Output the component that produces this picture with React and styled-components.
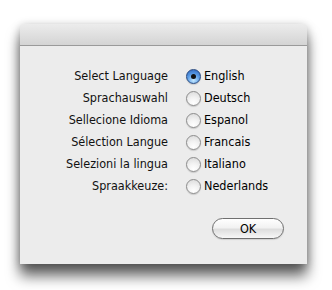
import { Fragment } from "react";
import styled, { createGlobalStyle } from "styled-components";

const FONT = `"Lucida Grande", "DejaVu Sans Condensed", "DejaVu Sans", sans-serif`;

const GlobalStyle = createGlobalStyle`
  body {
    margin: 0;
    background: #ffffff;
    font-family: ${FONT};
  }
`;

const Page = styled.div`
  padding: 24px 0 0 20px;
  width: 332px;
  height: 290px;
  box-sizing: border-box;
`;

const Window = styled.div`
  width: 287px;
  height: 240px;
  background: #ececec;
  border-radius: 5px 5px 0 0;
  box-shadow: 0 12px 14px rgba(0, 0, 0, 0.6), 0 2px 10px rgba(0, 0, 0, 0.28);
  display: flex;
  flex-direction: column;
`;

const TitleBar = styled.div`
  height: 21px;
  border-radius: 5px 5px 0 0;
  background: linear-gradient(#ececec, #d4d4d4);
  border-bottom: 1px solid #9a9a9a;
`;

const Body = styled.div`
  flex: 1;
  display: flex;
  flex-direction: column;
  padding: 22px 23px 0 0;
`;

const Grid = styled.div`
  display: grid;
  grid-template-columns: 148px auto;
  column-gap: 18px;
  row-gap: 6px;
  align-items: center;
`;

const Label = styled.div`
  text-align: right;
  font-size: 12.5px;
  color: #111;
  line-height: 16px;
`;

const Option = styled.label`
  display: flex;
  align-items: center;
  gap: 3px;
  font-size: 12.5px;
  color: #000;
  line-height: 16px;
`;

const Radio = styled.span`
  width: 15px;
  height: 15px;
  flex: none;
  border-radius: 50%;
  box-sizing: border-box;
  display: flex;
  align-items: center;
  justify-content: center;
  border: 1px solid ${(p) => (p.$on ? "#27497f" : "#8c8c8c")};
  background: ${(p) =>
    p.$on
      ? "radial-gradient(circle at 50% 80%, #c4e8ff 0%, #5b9de6 50%, #2a5fb8 100%)"
      : "radial-gradient(circle at 50% 85%, #ffffff 0%, #f2f2f2 45%, #d8d8d8 100%)"};
  box-shadow: 0 1px 1px rgba(0, 0, 0, 0.15);

  &::after {
    content: "";
    width: 5px;
    height: 5px;
    border-radius: 50%;
    background: #111;
    display: ${(p) => (p.$on ? "block" : "none")};
  }
`;

const Footer = styled.div`
  margin-top: auto;
  margin-bottom: 25px;
  display: flex;
  justify-content: flex-end;
`;

const Button = styled.button`
  width: 72px;
  height: 21px;
  border-radius: 11px;
  border: 1px solid #6f6f6f;
  background: linear-gradient(#ffffff, #f2f2f2 45%, #dedede 55%, #f7f7f7);
  font-family: ${FONT};
  font-size: 12.5px;
  color: #000;
  padding: 0;
  box-shadow: 0 1px 1px rgba(0, 0, 0, 0.12);
`;

const rows = [
  ["Select Language", "English"],
  ["Sprachauswahl", "Deutsch"],
  ["Sellecione Idioma", "Espanol"],
  ["Sélection Langue", "Francais"],
  ["Selezioni la lingua", "Italiano"],
  ["Spraakkeuze:", "Nederlands"],
];

export default function App() {
  return (
    <>
      <GlobalStyle />
      <Page>
        <Window>
          <TitleBar />
          <Body>
            <Grid>
              {rows.map(([label, lang], i) => (
                <Fragment key={label}>
                  <Label>{label}</Label>
                  <Option>
                    <Radio $on={i === 0} />
                    {lang}
                  </Option>
                </Fragment>
              ))}
            </Grid>
            <Footer>
              <Button>OK</Button>
            </Footer>
          </Body>
        </Window>
      </Page>
    </>
  );
}
